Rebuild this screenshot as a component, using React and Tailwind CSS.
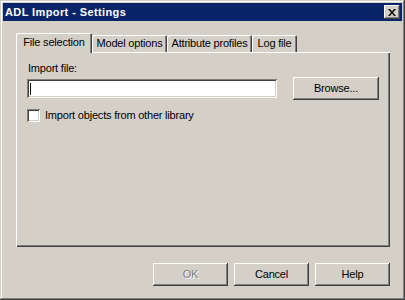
export default function App() {
	const raised = "shadow-[inset_-1px_-1px_#404040,inset_1px_1px_#ffffff,inset_-2px_-2px_#808080]";

	return (
		<div className="w-[405px] h-[300px] bg-[#d4d0c8] p-[3px] flex flex-col font-['Liberation_Sans',Arial,sans-serif] text-[11px] text-black tracking-[-0.2px] shadow-[inset_-1px_-1px_#404040,inset_1px_1px_#d4d0c8,inset_-2px_-2px_#808080,inset_2px_2px_#ffffff]">

			<div className="h-[18px] bg-[#0a246a] flex items-center justify-between pl-[2px] pr-[2px]">
				<span className="text-white font-bold text-[11px] tracking-[0.4px] leading-[13px]">ADL Import - Settings</span>
				<div className={`w-[16px] h-[14px] bg-[#d4d0c8] flex items-center justify-center ${raised}`}>
					<svg width="8" height="7" viewBox="0 0 8 7">
						<path d="M0 0h2l2 2.5L6 0h2L5 3.5 8 7H6L4 4.5 2 7H0l3-3.5z" fill="#000" />
					</svg>
				</div>
			</div>

			<div className="ml-[13px] mr-[12px] mt-[12px] flex flex-col">
				<div className="h-[19px] flex items-end">
					<div className="relative z-10 self-start w-[76px] h-[20px] bg-[#d4d0c8] flex items-center justify-center pb-[2px] rounded-tl-[2px] rounded-tr-[2px] shadow-[inset_1px_1px_#ffffff,inset_-1px_0_#404040,inset_-2px_0_#808080]">File selection</div>
					<div className="w-[75px] h-[17px] flex items-center justify-center rounded-tl-[2px] rounded-tr-[2px] shadow-[inset_1px_1px_#ffffff,inset_-1px_0_#404040,inset_-2px_0_#808080]">Model options</div>
					<div className="w-[85px] h-[17px] flex items-center justify-center rounded-tl-[2px] rounded-tr-[2px] shadow-[inset_1px_1px_#ffffff,inset_-1px_0_#404040,inset_-2px_0_#808080]">Attribute profiles</div>
					<div className="w-[45px] h-[17px] flex items-center justify-center rounded-tl-[2px] rounded-tr-[2px] shadow-[inset_1px_1px_#ffffff,inset_-1px_0_#404040,inset_-2px_0_#808080]">Log file</div>
				</div>

				<div className="h-[195px] pt-[10px] pl-[11px] flex flex-col shadow-[inset_1px_1px_#ffffff,inset_-1px_-1px_#404040,inset_-2px_-2px_#808080]">
					<p className="ml-[1px] h-[13px] leading-[13px]">Import file:</p>
					<div className="mt-[2px] flex items-start">
						<div className="mt-[2px] w-[250px] h-[19px] bg-white flex items-center shadow-[inset_1px_1px_#808080,inset_-1px_-1px_#ffffff,inset_2px_2px_#404040,inset_-2px_-2px_#d4d0c8]">
							<div className="ml-[3px] w-[1px] h-[12px] bg-black"></div>
						</div>
						<div className={`ml-[16px] w-[86px] h-[23px] flex items-center justify-center ${raised}`}>Browse...</div>
					</div>
					<div className="mt-[9px] flex items-center gap-[5px]">
						<div className="w-[13px] h-[13px] bg-white shadow-[inset_1px_1px_#808080,inset_-1px_-1px_#ffffff,inset_2px_2px_#404040,inset_-2px_-2px_#d4d0c8]"></div>
						<span className="leading-[13px]">Import objects from other library</span>
					</div>
				</div>
			</div>

			<div className="mt-[16px] mr-[12px] flex justify-end gap-[6px]">
				<div className={`w-[75px] h-[23px] flex items-center justify-center text-[#808080] [text-shadow:1px_1px_0_#ffffff] ${raised}`}>OK</div>
				<div className={`w-[75px] h-[23px] flex items-center justify-center ${raised}`}>Cancel</div>
				<div className={`w-[75px] h-[23px] flex items-center justify-center ${raised}`}>Help</div>
			</div>

		</div>
	);
}
